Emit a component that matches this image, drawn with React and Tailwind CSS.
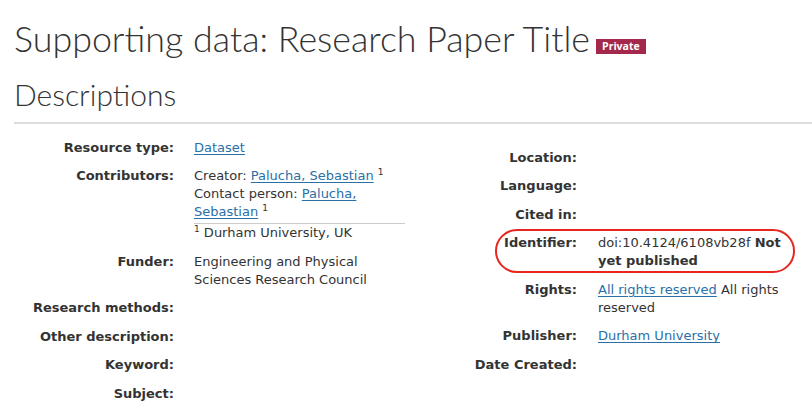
import React from "react";

const link = "text-[#2a6fa8] underline underline-offset-2 decoration-1";

function Sup() {
  return <span className="relative -top-[5px] text-[9px] leading-none">1</span>;
}

function Row({ label, children, className = "" }) {
  return (
    <div className={"flex pb-[10.5px] " + className}>
      <div className="w-[160px] shrink-0 text-right font-bold">{label}</div>
      <div className="pl-[20px] w-[231px]">{children}</div>
    </div>
  );
}

function RRow({ label, children, className = "" }) {
  return (
    <div className={"flex pb-[10.5px] " + className}>
      <div className="w-[172px] shrink-0 text-right font-bold">{label}</div>
      <div className="pl-[21px] w-[214px]">{children}</div>
    </div>
  );
}

export default function App() {
  return (
    <div className="w-[812px] h-[413px] overflow-hidden bg-white text-[#333]">
      <div className="pl-[14px]">
        <div className="flex items-start pt-[18px]">
          <h1 className="font-['Lato',sans-serif] font-light text-[35.8px] leading-[1.2] text-[#333]">
            Supporting data: Research Paper Title
          </h1>
          <span className="ml-[6px] mt-[21px] bg-[#a3284b] text-white font-['Open_Sans',sans-serif] font-bold text-[10.5px] leading-[15px] px-[6px]">
            Private
          </span>
        </div>
        <h2 className="font-['Lato',sans-serif] font-light text-[30px] leading-[1.2] mt-[15px] text-[#333]">
          Descriptions
        </h2>
        <div className="mt-[10px] h-[2px] bg-[#dddddd]" />
        <div className="flex font-['DejaVu_Sans','Verdana',sans-serif] text-[13px] leading-[18px] pt-[15px]">
          <div className="w-[391px]">
            <Row label="Resource type:">
              <a className={link}>Dataset</a>
            </Row>
            <Row label="Contributors:">
              <div>
                <div>
                  Creator: <a className={link}>Palucha, Sebastian</a> <Sup />
                </div>
                <div>
                  Contact person: <a className={link}>Palucha,</a>
                </div>
                <div>
                  <a className={link}>Sebastian</a> <Sup />
                </div>
              </div>
              <div className="border-t border-[#cccccc] mt-[2px]">
                <Sup /> Durham University, UK
              </div>
            </Row>
            <Row label="Funder:">
              <div>Engineering and Physical</div>
              <div>Sciences Research Council</div>
            </Row>
            <Row label="Research methods:" />
            <Row label="Other description:" />
            <Row label="Keyword:" />
            <Row label="Subject:" />
          </div>
          <div className="pt-[10px]">
            <RRow label="Location:" />
            <RRow label="Language:" />
            <RRow label="Cited in:" />
            <RRow label="Identifier:" className="relative">
              <div className="absolute left-[90px] right-[-4px] top-[-5px] bottom-[8px] border-[2.5px] border-[#e8261d] rounded-[22px] pointer-events-none" />
              <div>
                doi:10.4124/6108vb28f <b>Not</b>
              </div>
              <div>
                <b>yet published</b>
              </div>
            </RRow>
            <RRow label="Rights:">
              <div>
                <a className={link}>All rights reserved</a> All rights
              </div>
              <div>reserved</div>
            </RRow>
            <RRow label="Publisher:">
              <a className={link}>Durham University</a>
            </RRow>
            <RRow label="Date Created:" />
          </div>
        </div>
      </div>
    </div>
  );
}
